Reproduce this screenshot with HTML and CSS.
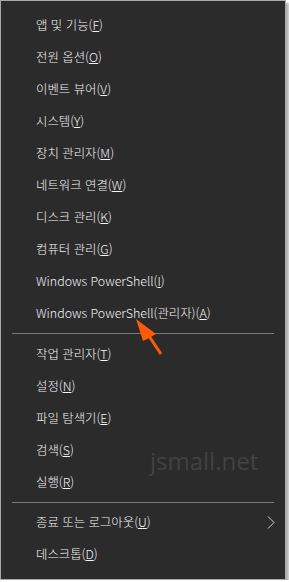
FILE: index.html
```html
<!DOCTYPE html>
<html lang="ko">
<head>
  <meta charset="UTF-8" />
  <title>Win+X 메뉴</title>
  <link rel="stylesheet" href="styles.css">
</head>
<body>
  <div class="menu">
    <ul class="group">
      <li class="item">앱 및 기능(<u>F</u>)</li>
      <li class="item">전원 옵션(<u>O</u>)</li>
      <li class="item">이벤트 뷰어(<u>V</u>)</li>
      <li class="item">시스템(<u>Y</u>)</li>
      <li class="item">장치 관리자(<u>M</u>)</li>
      <li class="item">네트워크 연결(<u>W</u>)</li>
      <li class="item">디스크 관리(<u>K</u>)</li>
      <li class="item">컴퓨터 관리(<u>G</u>)</li>
      <li class="item">Windows PowerShell(<u>I</u>)</li>
      <li class="item">Windows PowerShell(관리자)(<u>A</u>)</li>
    </ul>
    <div class="sep"></div>
    <ul class="group">
      <li class="item">작업 관리자(<u>T</u>)</li>
      <li class="item">설정(<u>N</u>)</li>
      <li class="item">파일 탐색기(<u>E</u>)</li>
      <li class="item">검색(<u>S</u>)</li>
      <li class="item">실행(<u>R</u>)</li>
    </ul>
    <div class="sep sep-low"></div>
    <ul class="group">
      <li class="item">종료 또는 로그아웃(<u>U</u>)
        <svg class="chevron" width="8" height="13" viewBox="0 0 8 13"><path d="M1 0.5 L7 6.5 L1 12.5" fill="none" stroke="#d8d8d8" stroke-width="1"/></svg>
      </li>
      <li class="item">데스크톱(<u>D</u>)</li>
    </ul>

    <div class="watermark">jsmall.net</div>
    <svg class="pointer" width="40" height="44" viewBox="0 0 40 44">
      <path d="M2 3 L22 18 L17.2 20.7 L28.2 37.2 L25.7 38.8 L14.7 22.3 L9 25 Z" fill="#ff5a0a"/>
    </svg>
  </div>
</body>
</html>
```

FILE: styles.css
```css
* { box-sizing: border-box; }
body {
  margin: 0;
  background: #ffffff;
  font-family: "Noto Sans CJK KR", "Noto Sans", sans-serif;
}
.menu {
  position: relative;
  width: 286px;
  height: 580px;
  background: #2b2b2b;
  border: 1px solid #a8a8a8;
  padding-top: 8px;
  box-shadow: 3px 3px 2px rgba(0, 0, 0, 0.3);
}
.group {
  list-style: none;
  margin: 0;
  padding: 0;
}
.item {
  display: flex;
  align-items: center;
  height: 32px;
  padding-left: 35px;
  padding-right: 12px;
  color: #f5f5f5;
  font-size: 12.4px;
  font-weight: 300;
  white-space: nowrap;
}
.item u { text-underline-offset: 1px; }
.chevron { margin-left: auto; margin-right: -2px; }
.sep {
  height: 9px;
  margin: 0 11px;
  border-top: 1px solid #7b7b7b;
  transform: translateY(4px);
}
.sep-low { height: 8px; }
.watermark {
  position: absolute;
  left: 149px;
  top: 443px;
  font-family: "Open Sans", sans-serif;
  font-size: 24px;
  color: #424242;
}
.pointer {
  position: absolute;
  left: 133px;
  top: 315px;
}
```
